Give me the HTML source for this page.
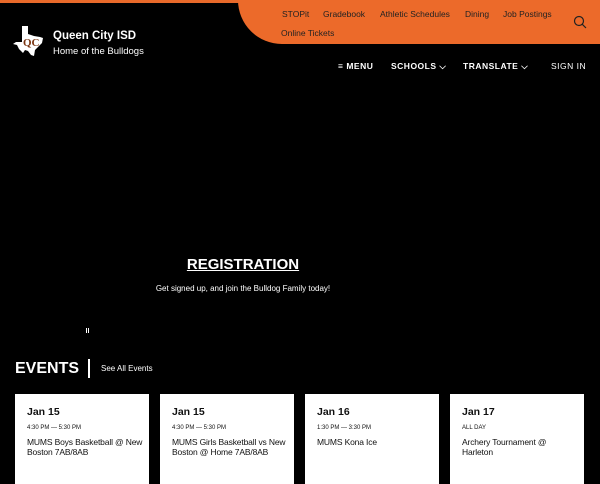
<!DOCTYPE html>
<html><head><meta charset="utf-8"><style>
*{margin:0;padding:0;box-sizing:border-box}
body{width:600px;height:480px;background:#000;overflow:hidden;position:relative;font-family:"Liberation Sans",sans-serif;color:#fff}
.topstrip{position:absolute;left:0;top:0;width:260px;height:3px;background:#e8692a}
.orange{position:absolute;left:238px;top:0;width:362px;height:44px;background:#ec6a2a;border-bottom-left-radius:44px 44px}
.ol a{position:absolute;font-size:8.5px;color:#222;text-decoration:none}
.brand1{position:absolute;left:53px;top:30px;font-size:11.5px;font-weight:bold}
.brand2{position:absolute;left:53px;top:46px;font-size:9.5px}
.nav{position:absolute;top:61px;font-size:8.5px;font-weight:bold;letter-spacing:.5px}
.reg{position:absolute;left:0;width:486px;top:256px;text-align:center;font-size:15px;font-weight:bold;text-decoration:underline}
.sub{position:absolute;left:0;width:486px;top:284px;text-align:center;font-size:8px}
.ev{position:absolute;left:15px;top:360px;font-size:16px;font-weight:bold}
.bar{position:absolute;left:88px;top:359px;width:2px;height:19px;background:#fff}
.see{position:absolute;left:101px;top:364px;font-size:8px}
.card{position:absolute;top:394px;width:134px;height:90px;background:#fff;color:#111;padding:12px 4px 12px 12px}
.card h3{font-size:10.5px;font-weight:bold;margin-bottom:7px}
.card .t{font-size:6px;margin-bottom:6px}
.card .d{font-size:8.5px;line-height:10px;letter-spacing:-0.15px}
</style></head><body>
<div class="topstrip"></div>
<div class="orange"></div>
<div class="ol">
<a style="left:282px;top:9px">STOPit</a>
<a style="left:323px;top:9px">Gradebook</a>
<a style="left:380px;top:9px">Athletic Schedules</a>
<a style="left:465px;top:9px">Dining</a>
<a style="left:503px;top:9px">Job Postings</a>
<a style="left:281px;top:28px">Online Tickets</a>
</div>
<svg style="position:absolute;left:573px;top:15px" width="14" height="14" viewBox="0 0 14 14"><circle cx="6" cy="6" r="4.5" fill="none" stroke="#222" stroke-width="1.2"/><line x1="9.3" y1="9.3" x2="13" y2="13" stroke="#222" stroke-width="1.2"/></svg>
<svg style="position:absolute;left:11px;top:25px" width="34" height="33" viewBox="0 0 34 33"><path d="M11 1h6v8l6 2 6 1 3 1-1 5-4 4-3 3-1 6-3-1-3-4-3-1-2 3-4-4-2-4-4-1 3-2h6z" fill="#fff"/><text x="12" y="21" font-size="11" font-weight="bold" fill="#7a3410" font-family="Liberation Serif">QC</text></svg>
<div class="brand1">Queen City ISD</div>
<div class="brand2">Home of the Bulldogs</div>
<div class="nav" style="left:338px">≡ MENU</div>
<div class="nav" style="left:391px">SCHOOLS ⌵</div>
<div class="nav" style="left:463px">TRANSLATE ⌵</div>
<div class="nav" style="left:551px;font-weight:normal">SIGN IN</div>
<div class="reg">REGISTRATION</div>
<div class="sub">Get signed up, and join the Bulldog Family today!</div>
<div style="position:absolute;left:86px;top:328px;width:1px;height:5px;background:#fff"></div>
<div style="position:absolute;left:88px;top:328px;width:1px;height:5px;background:#fff"></div>
<div class="ev">EVENTS</div><div class="bar"></div><div class="see">See All Events</div>
<div class="card" style="left:15px"><h3>Jan 15</h3><div class="t">4:30 PM — 5:30 PM</div><div class="d">MUMS Boys Basketball @ New Boston 7AB/8AB</div></div>
<div class="card" style="left:160px"><h3>Jan 15</h3><div class="t">4:30 PM — 5:30 PM</div><div class="d">MUMS Girls Basketball vs New Boston @ Home 7AB/8AB</div></div>
<div class="card" style="left:305px"><h3>Jan 16</h3><div class="t">1:30 PM — 3:30 PM</div><div class="d">MUMS Kona Ice</div></div>
<div class="card" style="left:450px"><h3>Jan 17</h3><div class="t">ALL DAY</div><div class="d">Archery Tournament @<br>Harleton</div></div>
</body></html>
